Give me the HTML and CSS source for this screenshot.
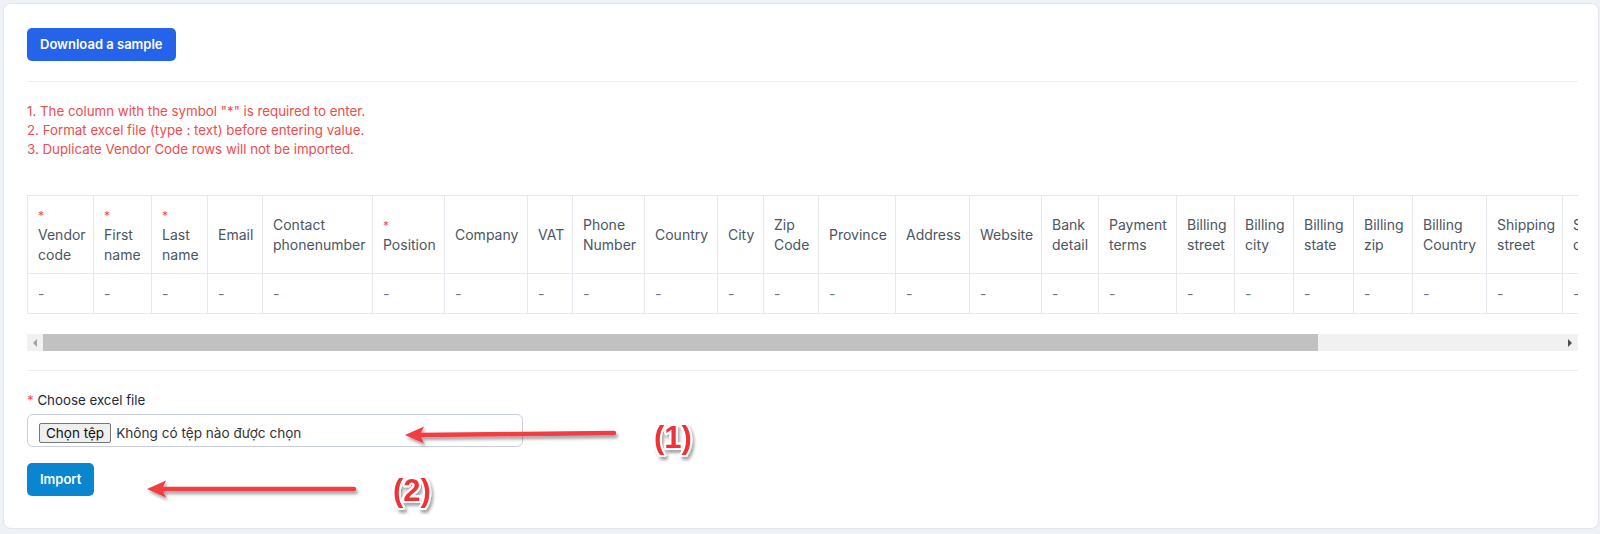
FILE: index.html
```html
<!DOCTYPE html>
<html lang="en">
<head>
<meta charset="utf-8">
<title>Import vendors</title>
<link rel="stylesheet" href="styles.css">
</head>
<body>
<div class="page">
  <div class="card">
    <button class="btn btn-primary">Download a sample</button>
    <div class="divider"></div>
    <div class="notes">
      <div>1. The column with the symbol "*" is required to enter.</div>
      <div>2. Format excel file (type : text) before entering value.</div>
      <div>3. Duplicate Vendor Code rows will not be imported.</div>
    </div>
    <div class="table-scroll">
      <table class="sample-table">
        <colgroup>
          <col><col><col><col><col><col><col><col><col><col><col><col><col><col>
          <col><col><col><col><col><col><col><col><col><col><col><col><col>
        </colgroup>
        <thead>
          <tr>
            <th><span class="req">*</span><br>Vendor code</th>
            <th><span class="req">*</span><br>First name</th>
            <th><span class="req">*</span><br>Last name</th>
            <th>Email</th>
            <th>Contact phonenumber</th>
            <th><span class="req">*</span><br>Position</th>
            <th>Company</th>
            <th>VAT</th>
            <th>Phone Number</th>
            <th>Country</th>
            <th>City</th>
            <th>Zip Code</th>
            <th>Province</th>
            <th>Address</th>
            <th>Website</th>
            <th>Bank detail</th>
            <th>Payment terms</th>
            <th>Billing street</th>
            <th>Billing city</th>
            <th>Billing state</th>
            <th>Billing zip</th>
            <th>Billing Country</th>
            <th>Shipping street</th>
            <th>Shipping city</th>
            <th>Shipping state</th>
            <th>Shipping zip</th>
            <th>Shipping Country</th>
          </tr>
        </thead>
        <tbody>
          <tr>
            <td>-</td><td>-</td><td>-</td><td>-</td><td>-</td><td>-</td><td>-</td><td>-</td><td>-</td>
            <td>-</td><td>-</td><td>-</td><td>-</td><td>-</td><td>-</td><td>-</td><td>-</td><td>-</td>
            <td>-</td><td>-</td><td>-</td><td>-</td><td>-</td><td>-</td><td>-</td><td>-</td><td>-</td>
          </tr>
        </tbody>
      </table>
    </div>
    <div class="hscroll">
      <span class="hscroll-btn hscroll-left"><span class="tri tri-left"></span></span>
      <span class="hscroll-track"><span class="hscroll-thumb"></span></span>
      <span class="hscroll-btn hscroll-right"><span class="tri tri-right"></span></span>
    </div>
    <div class="divider divider-lower"></div>
    <label class="field-label"><span class="req">*</span> Choose excel file</label>
    <div class="file-input">
      <span class="file-btn">Chọn tệp</span>
      <span class="file-name">Không có tệp nào được chọn</span>
    </div>
    <button class="btn btn-import">Import</button>
  </div>

  <svg class="annotations" width="1600" height="534" viewBox="0 0 1600 534" xmlns="http://www.w3.org/2000/svg">
    <defs>
      <filter id="shadow" x="-20%" y="-50%" width="140%" height="200%">
        <feDropShadow dx="2" dy="3" stdDeviation="1.6" flood-color="#000" flood-opacity="0.35"/>
      </filter>
    </defs>
    <g filter="url(#shadow)">
      <line x1="614" y1="433" x2="418" y2="435" class="arrow-line"/>
      <polygon points="405,435 424,426.5 420,435 424,443.5" class="arrow-head"/>
    </g>
    <g filter="url(#shadow)">
      <line x1="354" y1="489" x2="160" y2="489" class="arrow-line"/>
      <polygon points="147,489 166,480.5 162,489 166,497.5" class="arrow-head"/>
    </g>
    <text x="654" y="448" class="callout" filter="url(#shadow)">(1)</text>
    <text x="393" y="501" class="callout" filter="url(#shadow)">(2)</text>
  </svg>
</div>
</body>
</html>
```

FILE: styles.css
```css
html, body {
  margin: 0;
  padding: 0;
}

body {
  background: #eef1f6;
  font-family: Inter, "Noto Sans", sans-serif;
  color: #1f2937;
}

.page {
  position: relative;
  height: 534px;
  box-sizing: border-box;
  padding: 3px 1px 0 3px;
  overflow: hidden;
}

.card {
  background: #ffffff;
  border: 1px solid #e2e7ee;
  border-radius: 8px;
  padding: 24px 20px 32px 23px;
}

.btn {
  display: block;
  border: 0;
  border-radius: 5px;
  color: #ffffff;
  font-family: Inter, "Noto Sans", sans-serif;
  font-weight: 600;
  font-size: 13px;
  line-height: 33px;
  height: 33px;
  padding: 0 13px;
  cursor: pointer;
}

.btn-primary {
  background: #2563eb;
}

.btn-import {
  background: #0a85cf;
  margin-top: 16px;
}

.divider {
  height: 1px;
  background: #eceef2;
  margin-top: 20px;
}

.divider-lower {
  margin-top: 19px;
}

.notes {
  margin-top: 20px;
  color: #f04c4c;
  font-size: 13.3px;
  line-height: 19px;
}

.table-scroll {
  margin-top: 36px;
  overflow: hidden;
  padding-bottom: 20px;
}

.hscroll {
  display: flex;
  height: 17px;
  background: #f1f1f1;
}

.hscroll-btn {
  width: 16px;
  flex: none;
  display: flex;
  align-items: center;
  justify-content: center;
}

.hscroll-right {
  width: 17px;
}

.hscroll-track {
  flex: 1;
  display: flex;
}

.hscroll-thumb {
  width: 84%;
  background: #c1c1c1;
}

.tri {
  width: 0;
  height: 0;
  border-top: 4px solid transparent;
  border-bottom: 4px solid transparent;
}

.tri-left {
  border-right: 4px solid #a3a3a3;
}

.tri-right {
  border-left: 4px solid #505050;
}

.sample-table {
  border-collapse: collapse;
  table-layout: fixed;
  width: 1844px;
}

.sample-table col:nth-child(1) { width: 66px; }
.sample-table col:nth-child(2) { width: 58px; }
.sample-table col:nth-child(3) { width: 56px; }
.sample-table col:nth-child(4) { width: 55px; }
.sample-table col:nth-child(5) { width: 110px; }
.sample-table col:nth-child(6) { width: 72px; }
.sample-table col:nth-child(7) { width: 83px; }
.sample-table col:nth-child(8) { width: 45px; }
.sample-table col:nth-child(9) { width: 72px; }
.sample-table col:nth-child(10) { width: 73px; }
.sample-table col:nth-child(11) { width: 46px; }
.sample-table col:nth-child(12) { width: 55px; }
.sample-table col:nth-child(13) { width: 77px; }
.sample-table col:nth-child(14) { width: 74px; }
.sample-table col:nth-child(15) { width: 72px; }
.sample-table col:nth-child(16) { width: 57px; }
.sample-table col:nth-child(17) { width: 78px; }
.sample-table col:nth-child(18) { width: 58px; }
.sample-table col:nth-child(19) { width: 59px; }
.sample-table col:nth-child(20) { width: 60px; }
.sample-table col:nth-child(21) { width: 59px; }
.sample-table col:nth-child(22) { width: 74px; }
.sample-table col:nth-child(23) { width: 76px; }
.sample-table col:nth-child(24) { width: 76px; }
.sample-table col:nth-child(25) { width: 76px; }
.sample-table col:nth-child(26) { width: 76px; }
.sample-table col:nth-child(27) { width: 81px; }

.sample-table th,
.sample-table td {
  border: 1px solid #e5e8ee;
  padding: 0 10px;
  text-align: left;
  vertical-align: middle;
  font-size: 14px;
  line-height: 19.5px;
  font-weight: 400;
  color: #4b5563;
  white-space: normal;
}

.sample-table th {
  height: 77px;
}

.sample-table td {
  height: 39px;
  color: #6b7280;
}

.req {
  color: #ff4d4f;
}

.sample-table .req {
  font-size: 12px;
}

.field-label {
  display: block;
  margin-top: 20px;
  font-size: 13.3px;
  line-height: 19px;
  color: #1f2937;
}

.file-input {
  margin-top: 4px;
  width: 496px;
  height: 33px;
  box-sizing: border-box;
  border: 1px solid #c8cedb;
  border-radius: 6px;
  display: flex;
  align-items: flex-start;
  padding: 8px 11px 0 11px;
}

.file-btn {
  box-sizing: border-box;
  height: 20px;
  padding: 0 6px;
  border: 1px solid #767676;
  border-radius: 2px;
  background: #efefef;
  font-family: Inter, "Noto Sans", sans-serif;
  font-size: 13.5px;
  line-height: 18px;
  color: #111111;
}

.file-name {
  margin-left: 5px;
  font-family: Inter, "Noto Sans", sans-serif;
  font-size: 13.6px;
  line-height: 20px;
  color: #333333;
}

.annotations {
  position: absolute;
  top: 0;
  left: 0;
  pointer-events: none;
}

.arrow-line {
  stroke: #f23c42;
  stroke-width: 4.5;
  stroke-linecap: round;
}

.arrow-head {
  fill: #f23c42;
}

.callout {
  font-family: "Liberation Sans", Arial, sans-serif;
  font-weight: 700;
  font-size: 31px;
  fill: #ee3338;
  stroke: #ffffff;
  stroke-width: 4px;
  stroke-linejoin: round;
  paint-order: stroke fill;
}
```
